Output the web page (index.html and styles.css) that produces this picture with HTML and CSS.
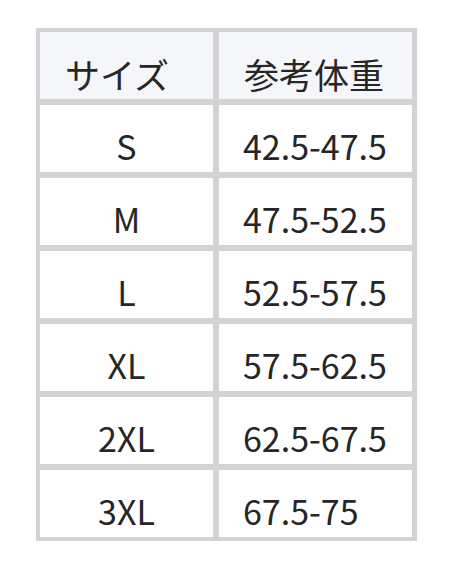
FILE: index.html
```html
<!DOCTYPE html>
<html lang="ja">
<head>
<meta charset="utf-8">
<link rel="stylesheet" href="styles.css">
</head>
<body>
<div class="size-table">
  <div class="cell head">サイズ</div>
  <div class="cell head">参考体重</div>
  <div class="cell size">S</div>
  <div class="cell weight">42.5-47.5</div>
  <div class="cell size">M</div>
  <div class="cell weight">47.5-52.5</div>
  <div class="cell size">L</div>
  <div class="cell weight">52.5-57.5</div>
  <div class="cell size">XL</div>
  <div class="cell weight">57.5-62.5</div>
  <div class="cell size">2XL</div>
  <div class="cell weight">62.5-67.5</div>
  <div class="cell size">3XL</div>
  <div class="cell weight">67.5-75</div>
</div>
</body>
</html>
```
FILE: styles.css
```css
html, body {
  margin: 0;
  padding: 0;
  background: #ffffff;
}
body {
  padding: 28px 0 0 36px;
  font-family: "Noto Sans CJK JP", "Noto Sans", sans-serif;
  color: #262626;
}
.size-table {
  display: grid;
  grid-template-columns: 173px 193px;
  grid-auto-rows: 67px;
  gap: 6px;
  padding: 4px 5px 4px 4px;
  width: max-content;
  background: #d3d3d3;
}
.cell {
  background: #ffffff;
  font-size: 34px;
  line-height: 48px;
  padding-top: 17px;
  box-sizing: border-box;
  white-space: nowrap;
}
.head {
  background: #f5f6fa;
  font-size: 35px;
  padding-top: 18px;
  padding-left: 25px;
}
.size {
  text-align: center;
}
.weight {
  padding-left: 24px;
}
```
